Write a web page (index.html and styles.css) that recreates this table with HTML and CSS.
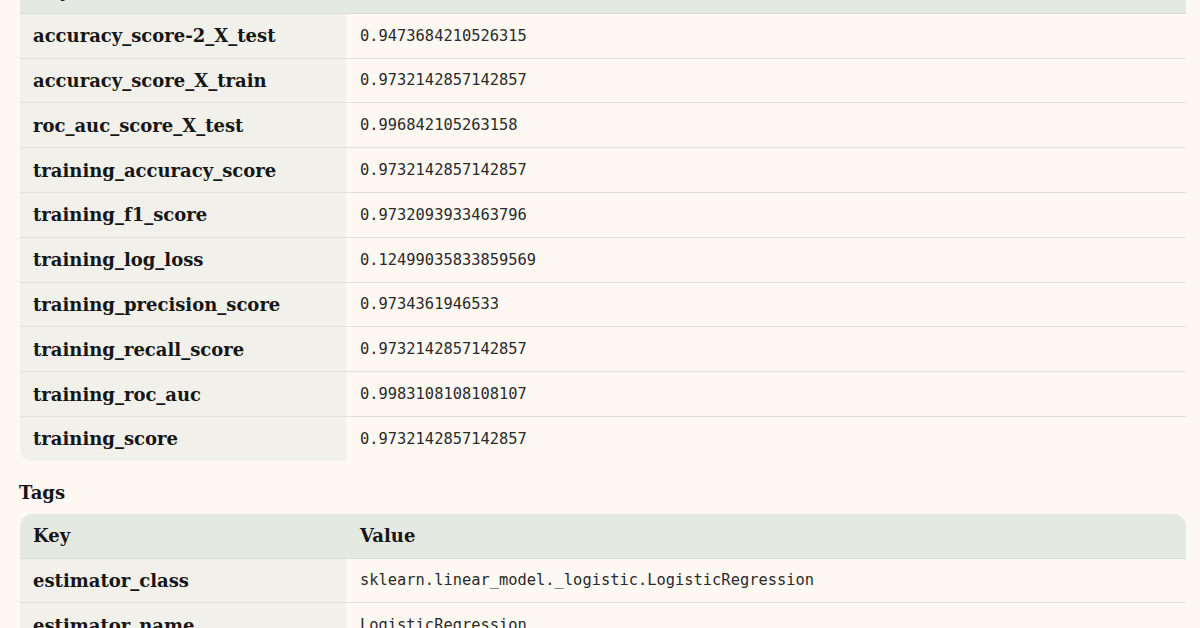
FILE: index.html
```html
<!DOCTYPE html>
<html>
<head>
<meta charset="utf-8">
<link rel="stylesheet" href="styles.css">
</head>
<body>
<div class="page">
  <table class="kv first">
    <thead><tr><th class="k">Key</th><th class="v">Value</th></tr></thead>
    <tbody>
      <tr><td class="k">accuracy_score-2_X_test</td><td class="v">0.9473684210526315</td></tr>
      <tr><td class="k">accuracy_score_X_train</td><td class="v">0.9732142857142857</td></tr>
      <tr><td class="k">roc_auc_score_X_test</td><td class="v">0.996842105263158</td></tr>
      <tr><td class="k">training_accuracy_score</td><td class="v">0.9732142857142857</td></tr>
      <tr><td class="k">training_f1_score</td><td class="v">0.9732093933463796</td></tr>
      <tr><td class="k">training_log_loss</td><td class="v">0.12499035833859569</td></tr>
      <tr><td class="k">training_precision_score</td><td class="v">0.9734361946533</td></tr>
      <tr><td class="k">training_recall_score</td><td class="v">0.9732142857142857</td></tr>
      <tr><td class="k">training_roc_auc</td><td class="v">0.9983108108108107</td></tr>
      <tr class="last"><td class="k">training_score</td><td class="v">0.9732142857142857</td></tr>
    </tbody>
  </table>
  <h3 class="heading">Tags</h3>
  <table class="kv">
    <thead><tr><th class="k">Key</th><th class="v">Value</th></tr></thead>
    <tbody>
      <tr><td class="k">estimator_class</td><td class="v">sklearn.linear_model._logistic.LogisticRegression</td></tr>
      <tr><td class="k">estimator_name</td><td class="v">LogisticRegression</td></tr>
    </tbody>
  </table>
</div>
</body>
</html>
```

FILE: styles.css
```css
html, body {
  margin: 0;
  padding: 0;
  background: #fdf8f2;
  overflow: hidden;
}
.page {
  padding: 0 14px 0 20px;
  color: #161616;
  font-family: "DejaVu Serif", Georgia, serif;
}
.kv {
  width: 100%;
  border-collapse: separate;
  border-spacing: 0;
  border-radius: 12px;
  overflow: hidden;
}
.first {
  margin-top: -31px;
}
.kv th, .kv td {
  height: 43.8px;
  padding: 0;
  border-bottom: 1px solid #e2e0da;
  text-align: left;
  vertical-align: middle;
}
.kv th {
  background: #e4e9e1;
  border-bottom-color: #d9ddd4;
  font-weight: bold;
  font-size: 18px;
}
.kv th.k { padding-left: 13px; border-top-left-radius: 12px; }
.kv th.v { padding-left: 14px; border-top-right-radius: 12px; }
.kv td.k {
  width: 313px;
  padding-left: 13px;
  background: #f1f0ea;
  font-weight: bold;
  font-size: 18px;
}
.kv td.v {
  padding-left: 14px;
  font-family: "DejaVu Sans Mono", monospace;
  font-size: 15.4px;
  color: #2a2a2a;
}
.kv tr.last td { border-bottom: none; }
.kv tr.last td.k { border-bottom-left-radius: 12px; }
.heading {
  margin: 21px 0 10px -1px;
  font-size: 18px;
  font-weight: bold;
  line-height: 22px;
}
```
